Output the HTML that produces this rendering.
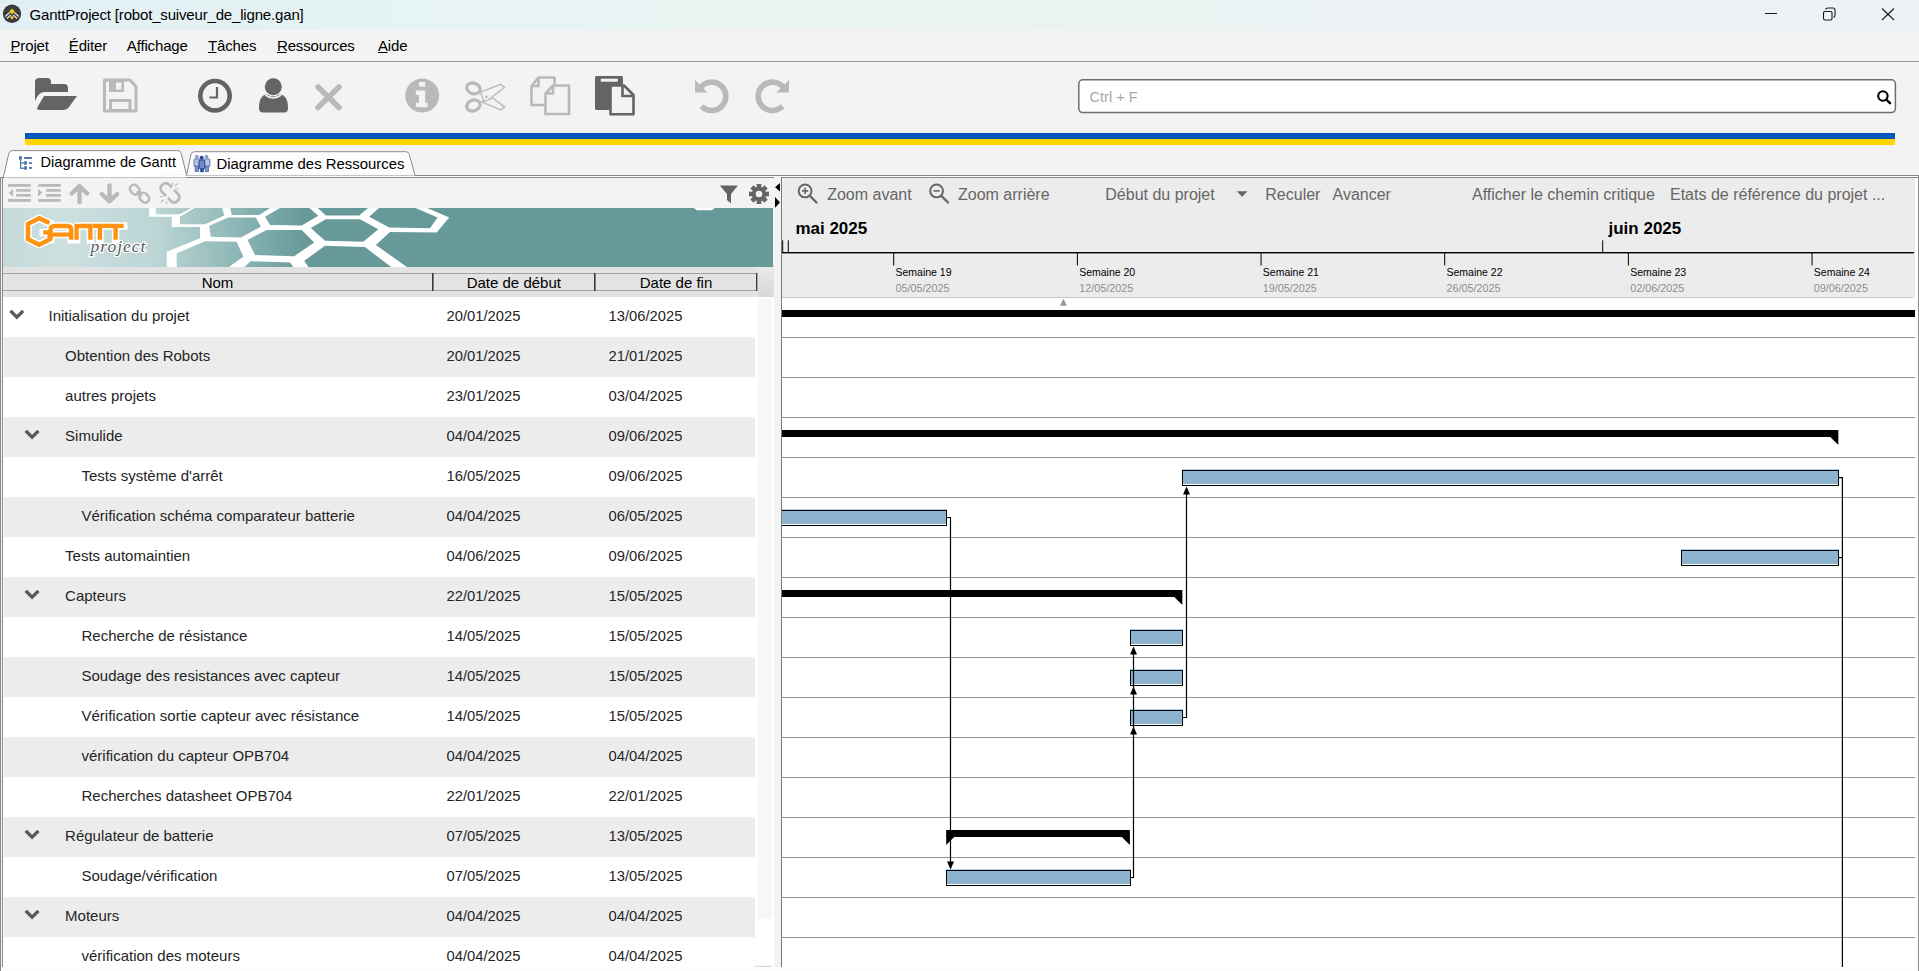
<!DOCTYPE html>
<html><head><meta charset="utf-8"><title>GanttProject</title>
<style>html,body{margin:0;padding:0;overflow:hidden;background:#f3f3f3}svg{display:block;font-family:"Liberation Sans", sans-serif}</style>
</head><body>
<svg width="1919" height="971" viewBox="0 0 1919 971"><rect x="0" y="0" width="1919" height="971" fill="#f3f3f3" /><defs><linearGradient id="tg" x1="0" x2="1" y1="0" y2="0"><stop offset="0" stop-color="#e2f0f5"/><stop offset="0.3" stop-color="#e8f4f3"/><stop offset="0.55" stop-color="#ebf3f2"/><stop offset="0.8" stop-color="#ecf2f5"/><stop offset="1" stop-color="#eef2f7"/></linearGradient></defs><rect x="0" y="0" width="1919" height="30" fill="url(#tg)" /><circle cx="12" cy="13.8" r="9.2" fill="#3a3a3a"/><path d="M12 8.6 L14.9 11.5 L12 14.4 L9.1 11.5Z" fill="#f5c518"/><path d="M12 15.8 L14.1 17.6 L12 19.4 L9.9 17.6Z" fill="#f5c518"/><path d="M5.2 16.4 L9.6 12.6 M6.9 18.6 L10.8 15.1 M18.8 16.4 L14.4 12.6 M17.1 18.6 L13.2 15.1" stroke="#e6e6e6" stroke-width="1.3" fill="none"/><text x="29.5" y="20" font-size="15" fill="#000" font-weight="400" text-anchor="start" letter-spacing="-0.17">GanttProject [robot_suiveur_de_ligne.gan]</text><path d="M1765 13.5 H1777" stroke="#1a1a1a" stroke-width="1"/><rect x="1823.5" y="11.5" width="8.5" height="8.5" rx="1.5" fill="none" stroke="#1a1a1a" stroke-width="1.1"/><path d="M1825.5 9.5 Q1826 8 1828 8 H1833 Q1835 8 1835 10 V15 Q1835 17 1833.5 17.5" fill="none" stroke="#1a1a1a" stroke-width="1.1"/><path d="M1882 8.5 L1894 20 M1894 8.5 L1882 20" stroke="#1a1a1a" stroke-width="1.1"/><text x="10.5" y="51" font-size="15" fill="#000" font-weight="400" text-anchor="start" letter-spacing="-0.15">Projet</text><text x="68.8" y="51" font-size="15" fill="#000" font-weight="400" text-anchor="start" letter-spacing="-0.15">Éditer</text><text x="126.8" y="51" font-size="15" fill="#000" font-weight="400" text-anchor="start" letter-spacing="-0.15">Affichage</text><text x="208" y="51" font-size="15" fill="#000" font-weight="400" text-anchor="start" letter-spacing="-0.15">Tâches</text><text x="277" y="51" font-size="15" fill="#000" font-weight="400" text-anchor="start" letter-spacing="-0.15">Ressources</text><text x="378" y="51" font-size="15" fill="#000" font-weight="400" text-anchor="start" letter-spacing="-0.15">Aide</text><rect x="10.5" y="52" width="8.5" height="1" fill="#000" /><rect x="68.8" y="52" width="8.5" height="1" fill="#000" /><rect x="136" y="52" width="4" height="1" fill="#000" /><rect x="208" y="52" width="8.5" height="1" fill="#000" /><rect x="277" y="52" width="9.5" height="1" fill="#000" /><rect x="378" y="52" width="9.5" height="1" fill="#000" /><rect x="0" y="61" width="1919" height="1" fill="#9a9a9a" /><path d="M35 82 Q35 78 39 78 H47 Q51 78 51 82 V84 H64 Q68 84 68 88 V92 H45 Q40 92 37 97 L35 101 Z" fill="#646464"/><path d="M44 96 H77 L69 107 Q67 110 63 110 H40 Q36 110 37.5 107 Z" fill="#646464"/><path d="M104.5 80 H130 L136 86.5 V111 H104.5 Z" fill="none" stroke="#b9b9b9" stroke-width="3" stroke-linejoin="round"/><rect x="109" y="81" width="15" height="11" fill="#b9b9b9"/><rect x="116" y="82.5" width="5.5" height="7" fill="#f3f3f3"/><rect x="110.5" y="100.5" width="19.5" height="10" fill="none" stroke="#b9b9b9" stroke-width="3"/><circle cx="215" cy="95.7" r="14.7" fill="none" stroke="#646464" stroke-width="4.6"/><path d="M217 87 V97.5 H209.5" fill="none" stroke="#646464" stroke-width="2.2"/><circle cx="273.3" cy="86.8" r="8.5" fill="#646464"/><path d="M259 108 Q259 94.5 267.5 94.5 Q273.3 98.5 279 94.5 Q288 94.5 288 108 Q288 112.6 284 112.6 H263 Q259 112.6 259 108 Z" fill="#646464"/><path d="M265.5 95 Q273.3 101 281 95" fill="none" stroke="#f3f3f3" stroke-width="1.6"/><path d="M318 87 L339 107.5 M339 87 L318 107.5" stroke="#b9b9b9" stroke-width="5.5" stroke-linecap="round"/><circle cx="422.2" cy="95.6" r="17" fill="#b9b9b9"/><rect x="419" y="82" width="6.2" height="4.6" fill="#f3f3f3"/><path d="M415.8 90.4 H425.2 V102.8 H427.6 V107.3 H415.8 V102.8 H419 V95 H415.8 Z" fill="#f3f3f3"/><ellipse cx="473.4" cy="88.4" rx="6.9" ry="5.3" transform="rotate(20 473.4 88.4)" fill="none" stroke="#b9b9b9" stroke-width="3.2"/><ellipse cx="473.4" cy="105.5" rx="6.9" ry="5.3" transform="rotate(-20 473.4 105.5)" fill="none" stroke="#b9b9b9" stroke-width="3.2"/><path d="M481.5 101.8 L500.6 109.8 L504.6 107.1 L492.5 97.8 Z" fill="#f3f3f3" stroke="#b9b9b9" stroke-width="1.4" stroke-linejoin="round"/><path d="M480.5 92.2 L500.6 84.3 L504.6 87.3 L488 100.2 L484 101.5 Z" fill="#f3f3f3" stroke="#b9b9b9" stroke-width="1.4" stroke-linejoin="round"/><circle cx="486.5" cy="96.8" r="1.4" fill="#b9b9b9"/><path d="M531.5 86 L538.5 77.5 H554.5 V84.5 M546 105 H531.5 V86 H538.5 V77.5" fill="none" stroke="#b9b9b9" stroke-width="2.6" stroke-linejoin="round"/><path d="M545.5 93.5 L553 85.5 H569 V114 H545.5 Z M545.5 93.5 H553 V85.5" fill="#f3f3f3" stroke="#b9b9b9" stroke-width="2.6" stroke-linejoin="round"/><rect x="595" y="76" width="28" height="34" rx="1.5" fill="#646464"/><rect x="600.8" y="78.7" width="17" height="3" fill="#f3f3f3"/><path d="M610.5 85.5 H624 L633.5 95 V114.2 H610.5 Z" fill="#f3f3f3" stroke="#646464" stroke-width="2.6" stroke-linejoin="round"/><path d="M622.5 85.5 V96 H633.5" fill="none" stroke="#646464" stroke-width="2.6"/><path d="M700.37 87.66 A14.2 14.2 0 1 1 701.5 106.3" fill="none" stroke="#b9b9b9" stroke-width="5.6"/><path d="M695 80 V92.5 H707.5 Z" fill="#b9b9b9"/><path d="M783.63 87.66 A14.2 14.2 0 1 0 782.5 106.3" fill="none" stroke="#b9b9b9" stroke-width="5.6"/><path d="M789 80 V92.5 H776.5 Z" fill="#b9b9b9"/><rect x="1078.8" y="79.8" width="816.6" height="32.8" rx="4" fill="#fff" stroke="#6e6e6e" stroke-width="1.5"/><text x="1089.6" y="101.8" font-size="14.5" fill="#a8a8a8" font-weight="400" text-anchor="start" >Ctrl + F</text><circle cx="1882.9" cy="96" r="4.7" fill="none" stroke="#000" stroke-width="2.1"/><path d="M1886.3 99.5 L1890 103.2" stroke="#000" stroke-width="2.4" stroke-linecap="round"/><rect x="25" y="133" width="1870" height="6" fill="#0057b7" /><rect x="25" y="139" width="1870" height="6" fill="#ffd700" /><rect x="186" y="175" width="1733" height="1" fill="#8a8a8a" /><rect x="186" y="176" width="1733" height="1" fill="#ffffff" /><rect x="0" y="177" width="774" height="1" fill="#888888" /><rect x="781" y="177" width="1138" height="1" fill="#888888" /><path d="M186.5 175.5 L191 154.5 Q191.8 151.7 194.5 151.7 H406 Q408.6 151.7 409.3 154.5 L415 175.5" fill="#fdfdfd" stroke="#8a8a8a" stroke-width="1"/><path d="M3.4 177 L8.8 153.5 Q9.6 150.6 12.4 150.6 H178 Q180.6 150.6 181.2 153.5 L186.4 174" fill="#ffffff" stroke="#8a8a8a" stroke-width="1"/><rect x="4" y="175" width="182" height="2.5" fill="#ffffff" /><g fill="#4a6db0"><rect x="19" y="156.2" width="2.8" height="3.5"/><rect x="24.2" y="161.2" width="2.7" height="3.5"/><rect x="24.2" y="166.2" width="2.7" height="3.5"/><rect x="24.2" y="157" width="7.7" height="1.9"/><rect x="29" y="162.2" width="2.9" height="1.7"/><rect x="29" y="167.1" width="2.9" height="1.7"/><rect x="20" y="159.5" width="1.2" height="9.3"/><rect x="20" y="162.4" width="4.5" height="1.2"/><rect x="20" y="167.6" width="4.5" height="1.2"/></g><text x="40.5" y="167.2" font-size="14.6" fill="#000" font-weight="400" text-anchor="start" >Diagramme de Gantt</text><g><circle cx="196.8" cy="156.6" r="1.9" fill="#8ea2cc"/><rect x="194" y="158.8" width="5.6" height="8" rx="1.2" fill="#b8c6e4" stroke="#4d68a8" stroke-width="0.9"/><rect x="195.2" y="166" width="3.4" height="5.4" fill="#7d93c6" stroke="#4d68a8" stroke-width="0.8"/><circle cx="206.5" cy="156.6" r="1.9" fill="#8ea2cc"/><rect x="204.2" y="158.8" width="5.6" height="8" rx="1.2" fill="#b8c6e4" stroke="#4d68a8" stroke-width="0.9"/><rect x="205.2" y="166" width="3.4" height="5.4" fill="#7d93c6" stroke="#4d68a8" stroke-width="0.8"/><circle cx="201.7" cy="157.8" r="2.1" fill="#2a4a98"/><rect x="199" y="160" width="5.8" height="8.8" rx="1.2" fill="#6f8cc8" stroke="#22408a" stroke-width="1"/><rect x="200.2" y="168" width="3.6" height="4.2" fill="#2f4f98"/></g><text x="216.5" y="168.7" font-size="14.9" fill="#000" font-weight="400" text-anchor="start" >Diagramme des Ressources</text><rect x="0" y="177" width="1" height="794" fill="#8a8a8a" /><rect x="2" y="177" width="1" height="790" fill="#8a8a8a" /><rect x="1918" y="175" width="1" height="796" fill="#8a8a8a" /><rect x="3" y="178" width="771" height="30" fill="#f3f3f3" /><g fill="#b9b9b9"><rect x="8" y="184" width="22.7" height="2.8"/><rect x="16.2" y="189.1" width="14.5" height="2.6"/><rect x="16.2" y="194" width="14.5" height="2.7"/><rect x="8" y="199" width="22.7" height="2.8"/><path d="M12.9 188.9 V196.7 L8.7 192.8Z"/></g><g fill="#b9b9b9"><rect x="38.2" y="184" width="22.6" height="2.8"/><rect x="46.2" y="189.1" width="14.6" height="2.6"/><rect x="46.2" y="194" width="14.6" height="2.7"/><rect x="38.2" y="199" width="22.6" height="2.8"/><path d="M38 188.9 V196.7 L42.2 192.8Z"/></g><path d="M79.5 202 V188 M71.8 193.5 L79.5 186 L87.2 193.5" fill="none" stroke="#b9b9b9" stroke-width="4.4" stroke-linecap="round" stroke-linejoin="round"/><path d="M109.5 185.5 V199.5 M101.8 194 L109.5 201.5 L117.2 194" fill="none" stroke="#b9b9b9" stroke-width="4.4" stroke-linecap="round" stroke-linejoin="round"/><rect x="130.8" y="184.5" width="8" height="10.5" rx="3.8" transform="rotate(-45 134.8 189.7)" fill="none" stroke="#b9b9b9" stroke-width="2.5"/><rect x="140.2" y="192.5" width="8" height="10.5" rx="3.8" transform="rotate(-45 144.2 197.7)" fill="none" stroke="#b9b9b9" stroke-width="2.5"/><path d="M136.5 191.5 L142 196" stroke="#b9b9b9" stroke-width="2.3"/><path d="M166 196 L161.5 191.5 Q159.5 188.5 161.5 185.5 L163.5 183.8 Q166.5 182.2 169 184.5 L172 187.5" fill="none" stroke="#b9b9b9" stroke-width="2.6"/><path d="M174 190 L178.5 194.5 Q180.3 197.5 178.5 200 L176.3 202 Q173.5 203.5 171 201.2 L168 198" fill="none" stroke="#b9b9b9" stroke-width="2.6"/><path d="M172.5 182.5 V185.5 M177.5 183.5 L175 186 M178.5 189 H175.5 M160 196.5 H163 M161 202 L163.5 199.5 M166.5 201 V204" stroke="#b9b9b9" stroke-width="1.2"/><path d="M719.8 185.5 H738 L731 194 V203.5 L727 200 V194 Z" fill="#646464"/><g fill="#646464"><rect x="756.7" y="184" width="4.6" height="5" transform="rotate(0 759 194)"/><rect x="756.7" y="184" width="4.6" height="5" transform="rotate(45 759 194)"/><rect x="756.7" y="184" width="4.6" height="5" transform="rotate(90 759 194)"/><rect x="756.7" y="184" width="4.6" height="5" transform="rotate(135 759 194)"/><rect x="756.7" y="184" width="4.6" height="5" transform="rotate(180 759 194)"/><rect x="756.7" y="184" width="4.6" height="5" transform="rotate(225 759 194)"/><rect x="756.7" y="184" width="4.6" height="5" transform="rotate(270 759 194)"/><rect x="756.7" y="184" width="4.6" height="5" transform="rotate(315 759 194)"/><circle cx="759" cy="194" r="7.2"/></g><circle cx="759" cy="194" r="3.3" fill="#f3f3f3"/><defs><linearGradient id="bg1" gradientUnits="userSpaceOnUse" x1="3" y1="0" x2="773" y2="0"><stop offset="0" stop-color="#c4dada"/><stop offset="0.08" stop-color="#cde0e0"/><stop offset="0.2" stop-color="#bcd5d5"/><stop offset="0.3" stop-color="#8fb7b7"/><stop offset="0.39" stop-color="#689a9a"/><stop offset="1" stop-color="#669999"/></linearGradient><clipPath id="bclip"><rect x="3" y="208" width="770" height="59"/></clipPath></defs><g clip-path="url(#bclip)"><rect x="3" y="208" width="770" height="59" fill="url(#bg1)" /><path d="M149.2 207 H455 V268 H166.7 V251.7 L200 238.3 V227.1 H171.7 V216.7 H149.2 Z" fill="#fff"/><polygon points="155.8,207 193.3,207 180,214.2 155.8,214.2" fill="url(#bg1)"/><polygon points="180,216.7 196,207 222,207 224.2,215.4 205,224.2 180,224.2" fill="url(#bg1)"/><polygon points="209.2,225.8 228.3,217.5 255.8,217.5 260.8,226.7 240.8,237.5 210.8,236.7" fill="url(#bg1)"/><polygon points="176.7,253.3 205,241.25 236.7,241.7 243.3,256.7 227.5,268 176.7,268" fill="url(#bg1)"/><polygon points="230,207 271.7,207 259.2,215 231.7,215" fill="url(#bg1)"/><polygon points="265,216.7 281.7,207 308.3,207 318.3,215.8 301.7,225.4 270,225" fill="url(#bg1)"/><polygon points="247.5,240 266.7,230 301.7,230 314.2,242.5 294.2,256.2 255,255" fill="url(#bg1)"/><polygon points="243.3,268 250.8,261.25 290,262.5 294.2,268" fill="url(#bg1)"/><polygon points="316.7,207 369.2,207 359.2,215.4 325.8,215.4" fill="url(#bg1)"/><polygon points="310.8,227.9 325.8,219.2 360,219.2 378.3,229.2 363.3,241.7 325,240.8" fill="url(#bg1)"/><polygon points="304.2,260.8 325,245.8 365,247.1 392.5,268 309.2,268" fill="url(#bg1)"/><polygon points="369.2,216.7 380,207 413.3,207 437.5,217.5 430,228.3 389.2,227.5" fill="url(#bg1)"/><polygon points="425,207 774,207 774,268 408.3,268 375.8,245 390,232.1 436.7,232.5 449.2,217.5" fill="url(#bg1)"/><path d="M693 207.5 H715 L712 210.3 H697 Z" fill="#fff"/><g stroke="#fff" stroke-width="7.5" stroke-linejoin="round" stroke-linecap="square" fill="none"><path d="M49.4 223 L39.3 218.3 L28 223.8 V239.2 L39.3 244.7 L49.6 239.4 V232.4 H43.2"/><path d="M50.6 239.8 V229.8 Q50.6 226 54.5 226 H67 Q71.2 226 71.2 229.8 V239.8 M50.6 234.6 H71"/><path d="M76.6 239.8 V226 H90.4 V239.8"/><path d="M93 225.9 H106.5 M99.9 225.9 V239.8 M106.6 225.9 H123.7 M115.6 225.9 V239.8"/></g><g stroke="#ff930f" stroke-width="4.4" stroke-linejoin="miter" fill="none"><path d="M49.4 223 L39.3 218.3 L28 223.8 V239.2 L39.3 244.7 L49.6 239.4 V232.4 H43.2"/><path d="M50.6 239.8 V229.8 Q50.6 226 54.5 226 H67 Q71.2 226 71.2 229.8 V239.8 M50.6 234.6 H71"/><path d="M76.6 239.8 V226 H90.4 V239.8"/><path d="M93 225.9 H106.5 M99.9 225.9 V239.8 M106.6 225.9 H123.7 M115.6 225.9 V239.8"/></g><text x="90.5" y="252" font-family="Liberation Serif" font-style="italic" font-size="17.5" fill="#5a5a5a" stroke="#fff" stroke-width="2.6" paint-order="stroke" letter-spacing="1">project</text></g><rect x="3" y="267" width="771" height="30" fill="#e3e3e3" /><rect x="3" y="273" width="754" height="1" fill="#a3a3a3" /><rect x="3" y="290" width="754" height="1" fill="#a3a3a3" /><rect x="432" y="273" width="1.6" height="18" fill="#3a3a3a" /><rect x="594" y="273" width="1.6" height="18" fill="#3a3a3a" /><rect x="756" y="273" width="1.6" height="18" fill="#3a3a3a" /><defs><linearGradient id="sc" x1="0" x2="0" y1="0" y2="1"><stop offset="0" stop-color="#eaeaea"/><stop offset="1" stop-color="#d8d8d8"/></linearGradient></defs><rect x="757.6" y="267" width="15.4" height="30" fill="url(#sc)" /><text x="217.5" y="287.6" font-size="15" fill="#000" font-weight="400" text-anchor="middle" >Nom</text><text x="513.8" y="287.6" font-size="15" fill="#000" font-weight="400" text-anchor="middle" >Date de début</text><text x="676" y="287.6" font-size="15" fill="#000" font-weight="400" text-anchor="middle" >Date de fin</text><rect x="3" y="297" width="771" height="674" fill="#ffffff" /><path d="M11.6 312 L16.8 317.2 L22 312" fill="none" stroke="#5a5a5a" stroke-width="3.3" stroke-linecap="square"/><text x="48.5" y="321" font-size="15" fill="#252525" font-weight="400" text-anchor="start" >Initialisation du projet</text><text x="446.5" y="321" font-size="15" fill="#252525" font-weight="400" text-anchor="start" textLength="74" lengthAdjust="spacingAndGlyphs">20/01/2025</text><text x="608.5" y="321" font-size="15" fill="#252525" font-weight="400" text-anchor="start" textLength="74" lengthAdjust="spacingAndGlyphs">13/06/2025</text><rect x="4" y="337" width="751" height="40" fill="#ececec" /><text x="65.1" y="361" font-size="15" fill="#252525" font-weight="400" text-anchor="start" >Obtention des Robots</text><text x="446.5" y="361" font-size="15" fill="#252525" font-weight="400" text-anchor="start" textLength="74" lengthAdjust="spacingAndGlyphs">20/01/2025</text><text x="608.5" y="361" font-size="15" fill="#252525" font-weight="400" text-anchor="start" textLength="74" lengthAdjust="spacingAndGlyphs">21/01/2025</text><text x="65.1" y="401" font-size="15" fill="#252525" font-weight="400" text-anchor="start" >autres projets</text><text x="446.5" y="401" font-size="15" fill="#252525" font-weight="400" text-anchor="start" textLength="74" lengthAdjust="spacingAndGlyphs">23/01/2025</text><text x="608.5" y="401" font-size="15" fill="#252525" font-weight="400" text-anchor="start" textLength="74" lengthAdjust="spacingAndGlyphs">03/04/2025</text><rect x="4" y="417" width="751" height="40" fill="#ececec" /><path d="M26.900000000000002 432 L32.1 437.2 L37.3 432" fill="none" stroke="#5a5a5a" stroke-width="3.3" stroke-linecap="square"/><text x="65.1" y="441" font-size="15" fill="#252525" font-weight="400" text-anchor="start" >Simulide</text><text x="446.5" y="441" font-size="15" fill="#252525" font-weight="400" text-anchor="start" textLength="74" lengthAdjust="spacingAndGlyphs">04/04/2025</text><text x="608.5" y="441" font-size="15" fill="#252525" font-weight="400" text-anchor="start" textLength="74" lengthAdjust="spacingAndGlyphs">09/06/2025</text><text x="81.5" y="481" font-size="15" fill="#252525" font-weight="400" text-anchor="start" >Tests système d'arrêt</text><text x="446.5" y="481" font-size="15" fill="#252525" font-weight="400" text-anchor="start" textLength="74" lengthAdjust="spacingAndGlyphs">16/05/2025</text><text x="608.5" y="481" font-size="15" fill="#252525" font-weight="400" text-anchor="start" textLength="74" lengthAdjust="spacingAndGlyphs">09/06/2025</text><rect x="4" y="497" width="751" height="40" fill="#ececec" /><text x="81.5" y="521" font-size="15" fill="#252525" font-weight="400" text-anchor="start" >Vérification schéma comparateur batterie</text><text x="446.5" y="521" font-size="15" fill="#252525" font-weight="400" text-anchor="start" textLength="74" lengthAdjust="spacingAndGlyphs">04/04/2025</text><text x="608.5" y="521" font-size="15" fill="#252525" font-weight="400" text-anchor="start" textLength="74" lengthAdjust="spacingAndGlyphs">06/05/2025</text><text x="65.1" y="561" font-size="15" fill="#252525" font-weight="400" text-anchor="start" >Tests automaintien</text><text x="446.5" y="561" font-size="15" fill="#252525" font-weight="400" text-anchor="start" textLength="74" lengthAdjust="spacingAndGlyphs">04/06/2025</text><text x="608.5" y="561" font-size="15" fill="#252525" font-weight="400" text-anchor="start" textLength="74" lengthAdjust="spacingAndGlyphs">09/06/2025</text><rect x="4" y="577" width="751" height="40" fill="#ececec" /><path d="M26.900000000000002 592 L32.1 597.2 L37.3 592" fill="none" stroke="#5a5a5a" stroke-width="3.3" stroke-linecap="square"/><text x="65.1" y="601" font-size="15" fill="#252525" font-weight="400" text-anchor="start" >Capteurs</text><text x="446.5" y="601" font-size="15" fill="#252525" font-weight="400" text-anchor="start" textLength="74" lengthAdjust="spacingAndGlyphs">22/01/2025</text><text x="608.5" y="601" font-size="15" fill="#252525" font-weight="400" text-anchor="start" textLength="74" lengthAdjust="spacingAndGlyphs">15/05/2025</text><text x="81.5" y="641" font-size="15" fill="#252525" font-weight="400" text-anchor="start" >Recherche de résistance</text><text x="446.5" y="641" font-size="15" fill="#252525" font-weight="400" text-anchor="start" textLength="74" lengthAdjust="spacingAndGlyphs">14/05/2025</text><text x="608.5" y="641" font-size="15" fill="#252525" font-weight="400" text-anchor="start" textLength="74" lengthAdjust="spacingAndGlyphs">15/05/2025</text><rect x="4" y="657" width="751" height="40" fill="#ececec" /><text x="81.5" y="681" font-size="15" fill="#252525" font-weight="400" text-anchor="start" >Soudage des resistances avec capteur</text><text x="446.5" y="681" font-size="15" fill="#252525" font-weight="400" text-anchor="start" textLength="74" lengthAdjust="spacingAndGlyphs">14/05/2025</text><text x="608.5" y="681" font-size="15" fill="#252525" font-weight="400" text-anchor="start" textLength="74" lengthAdjust="spacingAndGlyphs">15/05/2025</text><text x="81.5" y="721" font-size="15" fill="#252525" font-weight="400" text-anchor="start" >Vérification sortie capteur avec résistance</text><text x="446.5" y="721" font-size="15" fill="#252525" font-weight="400" text-anchor="start" textLength="74" lengthAdjust="spacingAndGlyphs">14/05/2025</text><text x="608.5" y="721" font-size="15" fill="#252525" font-weight="400" text-anchor="start" textLength="74" lengthAdjust="spacingAndGlyphs">15/05/2025</text><rect x="4" y="737" width="751" height="40" fill="#ececec" /><text x="81.5" y="761" font-size="15" fill="#252525" font-weight="400" text-anchor="start" >vérification du capteur OPB704</text><text x="446.5" y="761" font-size="15" fill="#252525" font-weight="400" text-anchor="start" textLength="74" lengthAdjust="spacingAndGlyphs">04/04/2025</text><text x="608.5" y="761" font-size="15" fill="#252525" font-weight="400" text-anchor="start" textLength="74" lengthAdjust="spacingAndGlyphs">04/04/2025</text><text x="81.5" y="801" font-size="15" fill="#252525" font-weight="400" text-anchor="start" >Recherches datasheet OPB704</text><text x="446.5" y="801" font-size="15" fill="#252525" font-weight="400" text-anchor="start" textLength="74" lengthAdjust="spacingAndGlyphs">22/01/2025</text><text x="608.5" y="801" font-size="15" fill="#252525" font-weight="400" text-anchor="start" textLength="74" lengthAdjust="spacingAndGlyphs">22/01/2025</text><rect x="4" y="817" width="751" height="40" fill="#ececec" /><path d="M26.900000000000002 832 L32.1 837.2 L37.3 832" fill="none" stroke="#5a5a5a" stroke-width="3.3" stroke-linecap="square"/><text x="65.1" y="841" font-size="15" fill="#252525" font-weight="400" text-anchor="start" >Régulateur de batterie</text><text x="446.5" y="841" font-size="15" fill="#252525" font-weight="400" text-anchor="start" textLength="74" lengthAdjust="spacingAndGlyphs">07/05/2025</text><text x="608.5" y="841" font-size="15" fill="#252525" font-weight="400" text-anchor="start" textLength="74" lengthAdjust="spacingAndGlyphs">13/05/2025</text><text x="81.5" y="881" font-size="15" fill="#252525" font-weight="400" text-anchor="start" >Soudage/vérification</text><text x="446.5" y="881" font-size="15" fill="#252525" font-weight="400" text-anchor="start" textLength="74" lengthAdjust="spacingAndGlyphs">07/05/2025</text><text x="608.5" y="881" font-size="15" fill="#252525" font-weight="400" text-anchor="start" textLength="74" lengthAdjust="spacingAndGlyphs">13/05/2025</text><rect x="4" y="897" width="751" height="40" fill="#ececec" /><path d="M26.900000000000002 912 L32.1 917.2 L37.3 912" fill="none" stroke="#5a5a5a" stroke-width="3.3" stroke-linecap="square"/><text x="65.1" y="921" font-size="15" fill="#252525" font-weight="400" text-anchor="start" >Moteurs</text><text x="446.5" y="921" font-size="15" fill="#252525" font-weight="400" text-anchor="start" textLength="74" lengthAdjust="spacingAndGlyphs">04/04/2025</text><text x="608.5" y="921" font-size="15" fill="#252525" font-weight="400" text-anchor="start" textLength="74" lengthAdjust="spacingAndGlyphs">04/04/2025</text><text x="81.5" y="961" font-size="15" fill="#252525" font-weight="400" text-anchor="start" >vérification des moteurs</text><text x="446.5" y="961" font-size="15" fill="#252525" font-weight="400" text-anchor="start" textLength="74" lengthAdjust="spacingAndGlyphs">04/04/2025</text><text x="608.5" y="961" font-size="15" fill="#252525" font-weight="400" text-anchor="start" textLength="74" lengthAdjust="spacingAndGlyphs">04/04/2025</text><rect x="755" y="297" width="19" height="670" fill="#ffffff" /><rect x="757.8" y="299" width="14.2" height="619.7" rx="2" fill="#f7f7f7"/><rect x="755" y="965.8" width="17" height="1" fill="#d0d0d0" /><rect x="774" y="178" width="7" height="793" fill="#f3f3f3" /><path d="M780 183 V191.6 L775 187.3 Z" fill="#000"/><path d="M775 197 V207.8 L780 202.4 Z" fill="#000"/><rect x="781" y="177" width="1" height="794" fill="#7a7a7a" /><rect x="782" y="178" width="1133" height="119" fill="#ececec" /><rect x="1915" y="178" width="3" height="793" fill="#fdfdfd" /><circle cx="805.1" cy="190.9" r="6.4" fill="none" stroke="#666666" stroke-width="2"/><path d="M810 196 L816.5 202.5" stroke="#666666" stroke-width="2.4" stroke-linecap="round"/><path d="M802 190.9 H808.2 M805.1 187.8 V194" stroke="#666666" stroke-width="1.6"/><text x="827.2" y="199.7" font-size="16" fill="#666666" font-weight="400" text-anchor="start" >Zoom avant</text><circle cx="936.6" cy="190.9" r="6.4" fill="none" stroke="#666666" stroke-width="2"/><path d="M941.5 196 L948 202.5" stroke="#666666" stroke-width="2.4" stroke-linecap="round"/><path d="M933.5 190.9 H939.7" stroke="#666666" stroke-width="1.6"/><text x="958" y="199.7" font-size="16" fill="#666666" font-weight="400" text-anchor="start" >Zoom arrière</text><text x="1105.3" y="199.7" font-size="16" fill="#666666" font-weight="400" text-anchor="start" >Début du projet</text><path d="M1236.7 191.3 H1247.5 L1242.1 196.7 Z" fill="#666666"/><text x="1265.3" y="199.7" font-size="16" fill="#666666" font-weight="400" text-anchor="start" >Reculer</text><text x="1332.5" y="199.7" font-size="16" fill="#666666" font-weight="400" text-anchor="start" >Avancer</text><text x="1472" y="199.7" font-size="16" fill="#666666" font-weight="400" text-anchor="start" >Afficher le chemin critique</text><text x="1670" y="199.7" font-size="16" fill="#666666" font-weight="400" text-anchor="start" >Etats de référence du projet ...</text><text x="795.4" y="233.5" font-size="17" fill="#000" font-weight="700" text-anchor="start" >mai 2025</text><text x="1608.5" y="233.5" font-size="17" fill="#000" font-weight="700" text-anchor="start" >juin 2025</text><rect x="782" y="252" width="1132" height="1.4" fill="#000" /><rect x="782.2" y="240.3" width="1" height="12" fill="#000" /><rect x="787.8" y="240.3" width="1" height="12" fill="#000" /><rect x="1602.2" y="240.3" width="1" height="12" fill="#000" /><rect x="893.2" y="252" width="1" height="13.5" fill="#000" /><text x="895.5" y="275.8" font-size="10.5" fill="#000" font-weight="400" text-anchor="start" >Semaine 19</text><text x="895.5" y="291.6" font-size="10.8" fill="#8e8e8e" font-weight="400" text-anchor="start" >05/05/2025</text><rect x="1076.8700000000001" y="252" width="1" height="13.5" fill="#000" /><text x="1079.17" y="275.8" font-size="10.5" fill="#000" font-weight="400" text-anchor="start" >Semaine 20</text><text x="1079.17" y="291.6" font-size="10.8" fill="#8e8e8e" font-weight="400" text-anchor="start" >12/05/2025</text><rect x="1260.54" y="252" width="1" height="13.5" fill="#000" /><text x="1262.84" y="275.8" font-size="10.5" fill="#000" font-weight="400" text-anchor="start" >Semaine 21</text><text x="1262.84" y="291.6" font-size="10.8" fill="#8e8e8e" font-weight="400" text-anchor="start" >19/05/2025</text><rect x="1444.21" y="252" width="1" height="13.5" fill="#000" /><text x="1446.51" y="275.8" font-size="10.5" fill="#000" font-weight="400" text-anchor="start" >Semaine 22</text><text x="1446.51" y="291.6" font-size="10.8" fill="#8e8e8e" font-weight="400" text-anchor="start" >26/05/2025</text><rect x="1627.88" y="252" width="1" height="13.5" fill="#000" /><text x="1630.18" y="275.8" font-size="10.5" fill="#000" font-weight="400" text-anchor="start" >Semaine 23</text><text x="1630.18" y="291.6" font-size="10.8" fill="#8e8e8e" font-weight="400" text-anchor="start" >02/06/2025</text><rect x="1811.55" y="252" width="1" height="13.5" fill="#000" /><text x="1813.85" y="275.8" font-size="10.5" fill="#000" font-weight="400" text-anchor="start" >Semaine 24</text><text x="1813.85" y="291.6" font-size="10.8" fill="#8e8e8e" font-weight="400" text-anchor="start" >09/06/2025</text><rect x="782" y="297" width="1131" height="1" fill="#c4c4c4" /><rect x="782" y="298" width="1133" height="673" fill="#ffffff" /><path d="M1063.4 298.5 L1066.8 305.7 H1060 Z" fill="#999"/><rect x="782" y="337" width="1133" height="1" fill="#939393" /><rect x="782" y="377" width="1133" height="1" fill="#939393" /><rect x="782" y="417" width="1133" height="1" fill="#939393" /><rect x="782" y="457" width="1133" height="1" fill="#939393" /><rect x="782" y="497" width="1133" height="1" fill="#939393" /><rect x="782" y="537" width="1133" height="1" fill="#939393" /><rect x="782" y="577" width="1133" height="1" fill="#939393" /><rect x="782" y="617" width="1133" height="1" fill="#939393" /><rect x="782" y="657" width="1133" height="1" fill="#939393" /><rect x="782" y="697" width="1133" height="1" fill="#939393" /><rect x="782" y="737" width="1133" height="1" fill="#939393" /><rect x="782" y="777" width="1133" height="1" fill="#939393" /><rect x="782" y="817" width="1133" height="1" fill="#939393" /><rect x="782" y="857" width="1133" height="1" fill="#939393" /><rect x="782" y="897" width="1133" height="1" fill="#939393" /><rect x="782" y="937" width="1133" height="1" fill="#939393" /><defs><clipPath id="cc"><rect x="782" y="298" width="1133" height="673"/></clipPath></defs><g clip-path="url(#cc)"><rect x="782" y="310" width="1133" height="7" fill="#000" /><rect x="782" y="430" width="1056.2885714285712" height="7" fill="#000" /><path d="M1838.2885714285712 436 V445 L1830.2885714285712 437 Z" fill="#000"/><rect x="782" y="590" width="400.3242857142857" height="7" fill="#000" /><path d="M1182.3242857142857 596 V605 L1174.3242857142857 597 Z" fill="#000"/><rect x="946.1771428571429" y="830" width="183.66999999999996" height="7" fill="#000" /><path d="M946.1771428571429 836 V845 L954.1771428571429 837 Z" fill="#000"/><path d="M1129.847142857143 836 V845 L1121.847142857143 837 Z" fill="#000"/><rect x="1182" y="469" width="657" height="1" fill="#a9d3ea" /><rect x="1182.5" y="470.5" width="656" height="15" fill="#8cb3cd" stroke="#000" stroke-width="1"/><rect x="1183" y="484" width="655" height="1" fill="#ffffff" /><rect x="770" y="509" width="177" height="1" fill="#a9d3ea" /><rect x="770.5" y="510.5" width="176" height="15" fill="#8cb3cd" stroke="#000" stroke-width="1"/><rect x="771" y="524" width="175" height="1" fill="#ffffff" /><rect x="1681" y="549" width="158" height="1" fill="#a9d3ea" /><rect x="1681.5" y="550.5" width="157" height="15" fill="#8cb3cd" stroke="#000" stroke-width="1"/><rect x="1682" y="564" width="156" height="1" fill="#ffffff" /><rect x="1130" y="629" width="53" height="1" fill="#a9d3ea" /><rect x="1130.5" y="630.5" width="52" height="15" fill="#8cb3cd" stroke="#000" stroke-width="1"/><rect x="1131" y="644" width="51" height="1" fill="#ffffff" /><rect x="1130" y="669" width="53" height="1" fill="#a9d3ea" /><rect x="1130.5" y="670.5" width="52" height="15" fill="#8cb3cd" stroke="#000" stroke-width="1"/><rect x="1131" y="684" width="51" height="1" fill="#ffffff" /><rect x="1130" y="709" width="53" height="1" fill="#a9d3ea" /><rect x="1130.5" y="710.5" width="52" height="15" fill="#8cb3cd" stroke="#000" stroke-width="1"/><rect x="1131" y="724" width="51" height="1" fill="#ffffff" /><rect x="946" y="869" width="185" height="1" fill="#a9d3ea" /><rect x="946.5" y="870.5" width="184" height="15" fill="#8cb3cd" stroke="#000" stroke-width="1"/><rect x="947" y="884" width="183" height="1" fill="#ffffff" /><path d="M946 517.5 H950.5 V868" stroke="#000" stroke-width="1.2" fill="none"/><path d="M950.5 869.5 L954.0 861.5 H947.0 Z" fill="#000"/><path d="M1130 877.5 H1133.5 V648" stroke="#000" stroke-width="1.2" fill="none"/><path d="M1133.5 646.5 L1137.0 654.5 H1130.0 Z" fill="#000"/><path d="M1133.5 686.5 L1137.0 694.5 H1130.0 Z" fill="#000"/><path d="M1133.5 726.5 L1137.0 734.5 H1130.0 Z" fill="#000"/><path d="M1182 717.5 H1186.5 V488" stroke="#000" stroke-width="1.2" fill="none"/><path d="M1186.5 486.5 L1190.0 494.5 H1183.0 Z" fill="#000"/><path d="M1838 477.7 H1842.4 V967 M1838 557.7 H1842.4" stroke="#000" stroke-width="1.2" fill="none"/></g><rect x="0" y="967" width="1919" height="4" fill="#fdfdfd" /><rect x="0" y="967" width="1" height="4" fill="#8a8a8a" /><rect x="1918" y="967" width="1" height="4" fill="#8a8a8a" /></svg>
</body></html>
